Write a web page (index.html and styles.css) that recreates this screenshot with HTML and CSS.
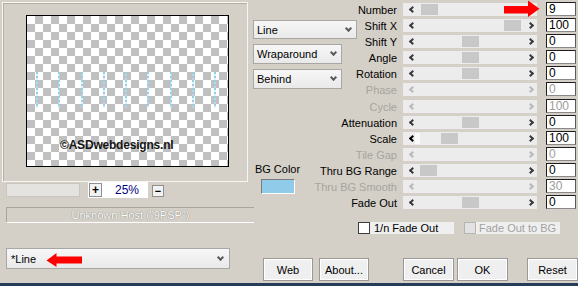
FILE: index.html
```html
<!DOCTYPE html>
<html>
<head>
<meta charset="utf-8">
<title>Line</title>
<link rel="stylesheet" href="styles.css">
</head>
<body>
<div class="win">
  <div class="top">
    <div class="left">
      <div class="group">
        <div class="preview">
          <div class="lines"><span></span><span></span><span></span><span></span><span></span><span></span><span></span><span></span><span></span></div>
          <div class="wm">©ASDwebdesigns.nl</div>
        </div>
      </div>
      <div class="zoomrow">
        <div class="blank"></div>
        <div class="zoombox"><span class="pm plus">+</span><span class="pct">25%</span></div>
        <span class="pm minus">−</span>
      </div>
      <div class="status">Unknown Host ("9PSP")</div>
    </div>
    <div class="controls">
      <div class="mid">
        <div class="dd w1"><span>Line</span><i class="chev"></i></div>
        <div class="dd w2"><span>Wraparound</span><i class="chev"></i></div>
        <div class="dd w2"><span>Behind</span><i class="chev"></i></div>
        <div class="bgc">
          <div class="bgl">BG Color</div>
          <div class="swatch"></div>
        </div>
      </div>
      <div class="params">
        <div class="grid">
          <div class="lbl">Number</div>
          <div class="sl"><i class="l"></i><b class="th" style="left:18px"></b><i class="r"></i></div>
          <div class="val">9</div>

          <div class="lbl">Shift X</div>
          <div class="sl"><i class="l"></i><b class="th" style="left:101px"></b><i class="r"></i></div>
          <div class="val">100</div>

          <div class="lbl">Shift Y</div>
          <div class="sl"><i class="l"></i><b class="th" style="left:59px"></b><i class="r"></i></div>
          <div class="val">0</div>

          <div class="lbl">Angle</div>
          <div class="sl"><i class="l"></i><b class="th" style="left:59px"></b><i class="r"></i></div>
          <div class="val">0</div>

          <div class="lbl">Rotation</div>
          <div class="sl"><i class="l"></i><b class="th" style="left:59px"></b><i class="r"></i></div>
          <div class="val">0</div>

          <div class="lbl dis">Phase</div>
          <div class="sl dis"><i class="l"></i><i class="r"></i></div>
          <div class="val dis">0</div>

          <div class="lbl dis">Cycle</div>
          <div class="sl dis"><i class="l"></i><i class="r"></i></div>
          <div class="val dis">100</div>

          <div class="lbl">Attenuation</div>
          <div class="sl"><i class="l"></i><b class="th" style="left:59px"></b><i class="r"></i></div>
          <div class="val">0</div>

          <div class="lbl">Scale</div>
          <div class="sl focus"><i class="l"></i><span class="hl"></span><b class="th" style="left:38px"></b><i class="r"></i></div>
          <div class="val">100</div>

          <div class="lbl dis">Tile Gap</div>
          <div class="sl dis"><i class="l"></i><i class="r"></i></div>
          <div class="val dis">0</div>

          <div class="lbl">Thru BG Range</div>
          <div class="sl"><i class="l"></i><b class="th" style="left:17px"></b><i class="r"></i></div>
          <div class="val">0</div>

          <div class="lbl dis">Thru BG Smooth</div>
          <div class="sl dis"><i class="l"></i><i class="r"></i></div>
          <div class="val dis">30</div>

          <div class="lbl">Fade Out</div>
          <div class="sl"><i class="l"></i><b class="th" style="left:59px"></b><i class="r"></i></div>
          <div class="val">0</div>
        </div>
        <div class="checks">
          <label class="cb"><span class="box"></span><span class="cbt">1/n Fade Out</span></label>
          <label class="cb dis"><span class="box"></span><span class="cbt">Fade Out to BG</span></label>
        </div>
      </div>
    </div>
  </div>
  <div class="bottom">
    <div class="dd preset"><span>*Line</span><i class="chev"></i></div>
    <button class="btn web">Web</button>
    <button class="btn about">About...</button>
    <button class="btn cancel">Cancel</button>
    <button class="btn ok">OK</button>
    <button class="btn reset">Reset</button>
  </div>
  <svg class="arrow a-top" width="36" height="18" viewBox="0 0 36 18"><polygon points="0,6 24,6 24,0.5 35.5,8.7 24,17 24,13.5 0,13.5" fill="#ff0000"/></svg>
  <svg class="arrow a-bot" width="37" height="16" viewBox="0 0 37 16"><polygon points="0.5,8.5 10.5,1 10.5,4.5 36,4.5 36,11.5 10.5,11.5 10.5,15" fill="#ff0000"/></svg>
</div>
</body>
</html>
```

FILE: styles.css
```css
* { box-sizing: border-box; }
html, body { margin: 0; padding: 0; }
body {
  font-family: "Liberation Sans", Arial, sans-serif;
  font-size: 11px;
  color: #000;
  background: #d4d0c8;
}
.win {
  position: relative;
  width: 578px;
  height: 286px;
  background: #d4d0c8;
  border-bottom: 3px solid #253d58;
  display: flex;
  flex-direction: column;
  overflow: hidden;
}
.top { display: flex; height: 240px; flex: none; }

/* left side */
.left { width: 250px; flex: none; }
.group {
  margin: 2px 0 0 2px;
  width: 246px;
  height: 180px;
  border: 1px solid #f6f5f2;
  box-shadow: inset 1px 1px 0 #b4b0a8;
  padding: 12px 0 0 23px;
}
.preview {
  width: 203px;
  height: 152px;
  border: 1px solid #000;
  background: repeating-conic-gradient(#c0c0c0 0 25%, #ffffff 0 50%) 0 0 / 16px 16px;
  padding-top: 56px;
}
.lines { display: flex; gap: 20.25px; padding-left: 9px; height: 36px; }
.lines span {
  width: 2px;
  height: 36px;
  background: repeating-linear-gradient(to bottom, #92cfe8 0 2px, rgba(200,230,245,0.5) 2px 4px);
}
.wm {
  margin-top: 30px;
  padding-left: 33px;
  font-weight: bold;
  font-size: 12px;
  line-height: 14px;
  color: #161616;
  letter-spacing: -0.2px;
}
.zoomrow { display: flex; align-items: flex-start; height: 16px; }
.blank {
  margin: 1px 0 0 6px;
  width: 74px;
  height: 14px;
  background: #e4e3e0;
  border: 1px solid #c9c6c0;
}
.zoombox {
  margin-left: 8px;
  width: 60px;
  height: 16px;
  background: #fff;
  display: flex;
  align-items: center;
}
.pm {
  display: flex;
  align-items: center;
  justify-content: center;
  background: #f2f2f2;
  border: 1px solid #8f8f8f;
  font-weight: bold;
  font-size: 12px;
  color: #000;
}
.plus { margin-left: 1px; width: 13px; height: 14px; }
.pct { margin-left: 13px; color: #000080; font-size: 12px; }
.minus { margin: 3px 0 0 4px; width: 12px; height: 12px; font-size: 11px; }
.status {
  margin: 9px 0 0 6px;
  width: 248px;
  height: 16px;
  border-top: 1px solid #a8a59e;
  border-left: 1px solid #a8a59e;
  border-bottom: 1px solid #fff;
  text-align: center;
  line-height: 14px;
  font-size: 11px;
  color: #fdfdfd;
  text-shadow: 0 0 1px #8a867e, 0 0 1px #8a867e;
}

/* right side */
.controls { display: flex; flex: 1; }
.mid { width: 60px; flex: none; padding: 20px 0 0 3px; }
.dd {
  display: flex;
  align-items: center;
  justify-content: space-between;
  border: 1px solid #a9a7a2;
  background: linear-gradient(#f7f7f7, #e9e9e9);
  padding: 0 4px 0 3px;
  font-size: 11px;
  white-space: nowrap;
}
.chev {
  width: 5px;
  height: 5px;
  border-right: 2px solid #5a5a5a;
  border-bottom: 2px solid #5a5a5a;
  transform: rotate(45deg);
  margin: 0 1px 3px 0;
}
.w1 { width: 104px; height: 19px; }
.w2 { width: 89px; height: 20px; margin-top: 5px; }
.bgc { margin: 73px 0 0 4px; width: 41px; display: flex; flex-direction: column; align-items: center; }
.bgl { line-height: 14px; white-space: nowrap; font-size: 11px; }
.swatch {
  margin-top: 3px;
  width: 34px;
  height: 15px;
  background: #90cbea;
  border-top: 1px solid #7a7a7a;
  border-left: 1px solid #7a7a7a;
  border-bottom: 1px solid #fff;
  border-right: 1px solid #fff;
}

.params { flex: 1; padding-top: 2px; }
.grid {
  display: grid;
  grid-template-columns: 93px 143px 30px;
  grid-auto-rows: 16.1px;
}
.lbl {
  text-align: right;
  padding-right: 6px;
  line-height: 16px;
  white-space: nowrap;
  font-size: 11px;
}
.lbl.dis { color: #a6a49f; }
.sl {
  position: relative;
  width: 134px;
  height: 13px;
  margin-top: 1px;
  background: #ececec;
  display: flex;
  align-items: center;
  justify-content: space-between;
  padding: 0 4px 0 7px;
}
.sl .l, .sl .r {
  width: 5px;
  height: 5px;
  border: 0 solid #3a3a3a;
}
.sl .l { border-left-width: 2px; border-bottom-width: 2px; transform: rotate(45deg); }
.sl .r { border-right-width: 2px; border-top-width: 2px; transform: rotate(45deg); }
.sl.dis .l, .sl.dis .r { border-color: #b9b9b9; }
.sl.focus .l { border-color: #000; border-left-width: 2.5px; border-bottom-width: 2.5px; }
.sl .hl { position: absolute; left: 12px; top: 1px; width: 5px; height: 11px; background: #fafafa; }
.th {
  position: absolute;
  top: 1px;
  width: 17px;
  height: 11px;
  background: #c8c8c8;
}
.val {
  width: 30px;
  height: 14px;
  background: #fff;
  border: 1px solid;
  border-color: #1e1e1e #5a5a5a #8a8a8a #1e1e1e;
  padding-left: 2px;
  line-height: 12px;
  font-size: 12px;
}
.val.dis { color: #9c9c9c; }

.checks { display: flex; margin: 10.7px 0 0 48px; }
.cb {
  display: flex;
  align-items: center;
  width: 96px;
  height: 12px;
  background: #efefef;
  font-size: 11px;
  white-space: nowrap;
}
.cb + .cb { margin-left: 10px; }
.box {
  width: 12px;
  height: 12px;
  flex: none;
  background: #fff;
  border: 1px solid #3c3c3c;
}
.cbt { padding-left: 4px; line-height: 12px; }
.cb.dis .box { background: #e2e2e2; border-color: #b5b5b5; }
.cb.dis .cbt { color: #a2a2a2; padding-left: 3px; }

/* bottom */
.bottom { display: flex; align-items: flex-start; flex: 1; }
.preset { width: 224px; height: 21px; margin: 8px 0 0 6px; padding-left: 4px; padding-right: 5px; }
.btn {
  width: 50px;
  height: 23px;
  margin-top: 18px;
  padding: 0;
  border: 1px solid #9a9995;
  box-shadow: inset 0 0 0 1px #ffffff;
  background: #efefef;
  font-family: "Liberation Sans", Arial, sans-serif;
  font-size: 11px;
  color: #000;
}
.web { margin-left: 33px; }
.about { margin-left: 6px; }
.cancel { margin-left: 34px; width: 51px; }
.ok { margin-left: 3px; width: 51px; }
.reset { margin-left: 19px; width: 51px; }

/* overlays */
.arrow { position: absolute; }
.a-top { left: 504px; top: 0; }
.a-bot { left: 46px; top: 252px; }
```
